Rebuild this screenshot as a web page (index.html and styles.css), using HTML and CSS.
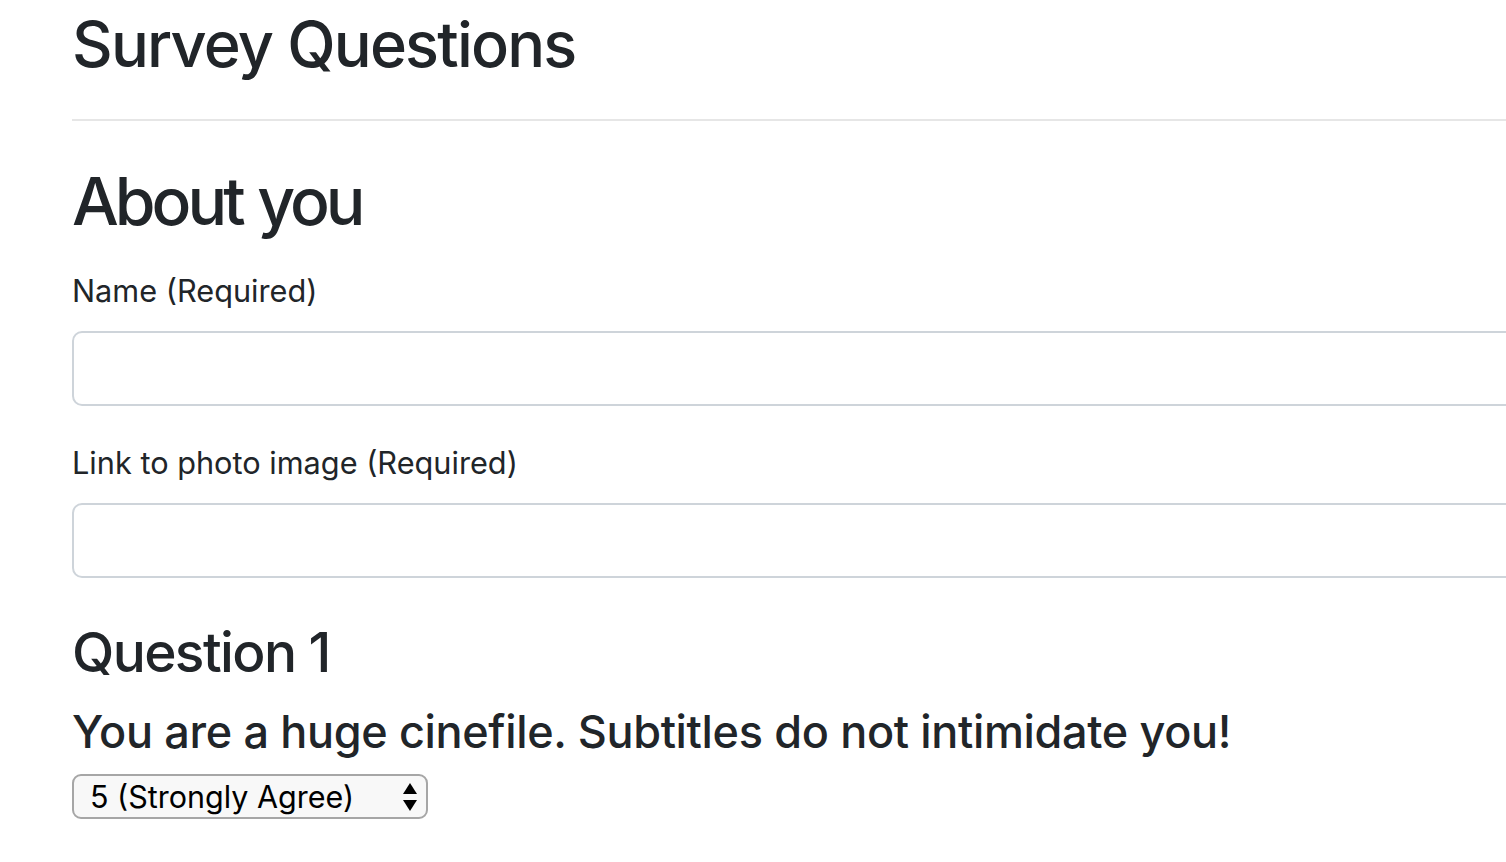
FILE: index.html
```html
<!DOCTYPE html>
<html lang="en">
<head>
<meta charset="utf-8">
<title>Survey Questions</title>
<link rel="stylesheet" href="styles.css">
</head>
<body>
<div class="container">
  <h1 class="page-title">Survey Questions</h1>
  <hr class="divider">
  <h2 class="section-title">About you</h2>
  <form class="survey-form">
    <div class="form-group">
      <label class="form-label" for="name">Name (Required)</label>
      <input class="form-control" id="name" type="text">
    </div>
    <div class="form-group">
      <label class="form-label" for="photo">Link to photo image (Required)</label>
      <input class="form-control" id="photo" type="text">
    </div>
    <h3 class="question-title">Question 1</h3>
    <h4 class="question-text">You are a huge cinefile. Subtitles do not intimidate you!</h4>
    <div class="select-wrap">
      <select class="native-select">
        <option>5 (Strongly Agree)</option>
        <option>4</option>
        <option>3</option>
        <option>2</option>
        <option>1 (Strongly Disagree)</option>
      </select>
      <svg class="select-arrows" width="16" height="30" viewBox="0 0 16 30" aria-hidden="true">
        <path d="M8 1 L15 12 L1 12 Z" fill="#000"/>
        <path d="M1 18 L15 18 L8 29 Z" fill="#000"/>
      </svg>
    </div>
  </form>
</div>
</body>
</html>
```

FILE: styles.css
```css
html, body {
  margin: 0;
  padding: 0;
  background: #fff;
}
body {
  font-family: Inter, "Noto Sans", "Liberation Sans", sans-serif;
  color: #212529;
  overflow: hidden;
}
.container {
  padding-left: 72px;
  width: 1600px;
}
.page-title {
  font-size: 63px;
  font-weight: 500;
  line-height: 88px;
  margin: 0;
  letter-spacing: -1.8px;
}
.divider {
  border: 0;
  border-top: 2px solid #e6e6e6;
  margin: 31px 0 0 0;
}
.section-title {
  font-size: 66px;
  font-weight: 500;
  line-height: 80px;
  margin: 40px 0 0 0;
  letter-spacing: -4px;
  word-spacing: 2px;
}
.survey-form {
  margin: 0;
}
.form-group {
  display: flex;
  flex-direction: column;
}
.form-group + .form-group {
  margin-top: 7px;
}
.form-label {
  font-size: 30.7px;
  line-height: 48px;
  margin: 26px 0 16px 0;
}
.form-control {
  box-sizing: border-box;
  height: 75px;
  width: 100%;
  border: 2px solid #ced4da;
  border-radius: 10px;
  background: #fff;
  margin: 0;
  padding: 0 24px;
  font: inherit;
  font-size: 32px;
}
.question-title {
  font-size: 55px;
  font-weight: 500;
  line-height: 68px;
  margin: 40px 0 0 0;
  letter-spacing: -1.6px;
}
.question-text {
  font-size: 45px;
  font-weight: 500;
  line-height: 60px;
  margin: 16px 0 0 0;
  letter-spacing: -0.35px;
}
.select-wrap {
  position: relative;
  display: inline-block;
  margin-top: 12px;
}
.native-select {
  appearance: none;
  -webkit-appearance: none;
  box-sizing: border-box;
  width: 356px;
  height: 45px;
  border: 2px solid #a6a6a6;
  border-radius: 9px;
  background: #f8f8f8;
  color: #000;
  font-family: Inter, "Noto Sans", "Liberation Sans", sans-serif;
  font-size: 30.5px;
  letter-spacing: 0;
  padding: 0 0 0 16px;
  margin: 0;
}
.select-arrows {
  position: absolute;
  right: 10px;
  top: 8px;
  pointer-events: none;
}
```
